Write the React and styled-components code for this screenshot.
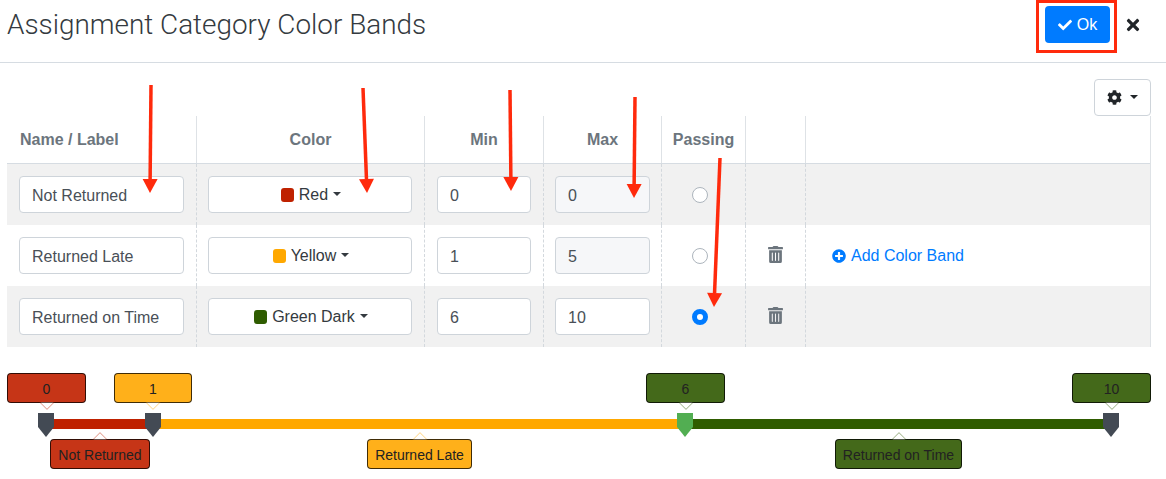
import React from 'react';
import styled, { createGlobalStyle } from 'styled-components';
import { FaCheck, FaTimes, FaCog, FaTrashAlt, FaPlusCircle } from 'react-icons/fa';

const GlobalStyle = createGlobalStyle`
  html, body { margin: 0; padding: 0; background: #fff; }
  body {
    font-family: "Liberation Sans", Arial, sans-serif;
    font-size: 16px;
    color: #343a40;
    overflow: hidden;
  }
  * { box-sizing: border-box; }
`;

const COLUMNS = '190px 228px 119px 118px 84px 60px 1fr';

const Page = styled.div`
  position: relative;
  width: 1166px;
  height: 479px;
  overflow: hidden;
`;

const Header = styled.header`
  display: flex;
  align-items: center;
  justify-content: space-between;
  height: 63px;
  padding: 0 24px 13px 7px;
  border-bottom: 1px solid #d6dce2;
`;

const Title = styled.h1`
  margin: 0;
  font-family: Roboto, "Liberation Sans", sans-serif;
  font-size: 27.9px;
  font-weight: 300;
  color: #343a40;
`;

const HeaderActions = styled.div`
  display: flex;
  align-items: center;
  gap: 14px;
`;

const OkButton = styled.button`
  display: flex;
  align-items: center;
  justify-content: center;
  gap: 5px;
  width: 65px;
  height: 37px;
  border: 0;
  border-radius: 4px;
  background: #007bff;
  color: #fff;
  font: inherit;
  font-size: 16px;
`;

const CloseButton = styled.button`
  display: flex;
  padding: 0;
  border: 0;
  background: none;
  color: #212529;
  font-size: 18px;
`;

const Toolbar = styled.div`
  display: flex;
  justify-content: flex-end;
  padding: 16px 15px 0 0;
`;

const GearButton = styled.button`
  display: flex;
  align-items: center;
  justify-content: center;
  gap: 8px;
  width: 57px;
  height: 37px;
  border: 1px solid #ced4da;
  border-radius: 4px;
  background: #fff;
  color: #212529;
  font-size: 15px;
`;

const Caret = styled.span`
  display: inline-block;
  width: 0;
  height: 0;
  margin-top: -2px;
  border-top: 4px solid currentColor;
  border-left: 4px solid transparent;
  border-right: 4px solid transparent;
`;

const Table = styled.div`
  margin: 0 15px 0 7px;
  border-right: 1px solid #dee2e6;
`;

const HeadRow = styled.div`
  display: grid;
  grid-template-columns: ${COLUMNS};
  height: 48px;
  border-bottom: 1px solid #d6dce2;
`;

const HeadCell = styled.div`
  display: flex;
  align-items: center;
  justify-content: ${p => (p.$left ? 'flex-start' : 'center')};
  padding-left: ${p => (p.$left ? '13px' : '0')};
  border-right: ${p => (p.$last ? '0' : '1px solid #dee2e6')};
  color: #6c757d;
  font-size: 16px;
  font-weight: 700;
`;

const Row = styled.div`
  display: grid;
  grid-template-columns: ${COLUMNS};
  height: 61px;
  background: ${p => (p.$shaded ? '#f1f1f1' : '#fff')};
`;

const Cell = styled.div`
  display: flex;
  align-items: center;
  padding: 0 ${p => p.$pr ?? 12}px 0 ${p => p.$pl ?? 12}px;
  border-right: ${p => (p.$last ? '0' : '1px dashed #d3d8dd')};
`;

const CenterCell = styled(Cell)`
  justify-content: center;
  padding: 0 ${p => p.$pr ?? 0}px 0 0;
`;

const TextInput = styled.div`
  display: flex;
  align-items: center;
  width: 100%;
  height: 37px;
  padding: 2px 12px 0;
  border: 1px solid #ced4da;
  border-radius: 4px;
  background: ${p => (p.$readOnly ? '#f6f7f9' : '#fff')};
  color: #495057;
  font-size: 16px;
`;

const ColorButton = styled.div`
  display: flex;
  align-items: center;
  justify-content: center;
  gap: 5px;
  width: 100%;
  height: 37px;
  padding-left: 2px;
  border: 1px solid #ced4da;
  border-radius: 4px;
  background: #fff;
  color: #343a40;
  font-size: 16px;
`;

const Swatch = styled.span`
  width: 13px;
  height: 14px;
  border-radius: 3px;
  background: ${p => p.$color};
`;

const Radio = styled.span`
  width: 16px;
  height: 16px;
  border-radius: 50%;
  background: #fff;
  border: ${p => (p.$checked ? '5px solid #007bff' : '1px solid #adb5bd')};
`;

const TrashIcon = styled(FaTrashAlt)`
  color: #6c757d;
  font-size: 17px;
  margin-top: -3px;
`;

const AddLink = styled.a`
  display: flex;
  align-items: center;
  gap: 5px;
  margin-left: 14px;
  color: #007bff;
  font-size: 16px;
`;

const Slider = styled.div`
  position: relative;
  height: 116px;
  margin-top: 16px;
`;

const Track = styled.div`
  position: absolute;
  top: 56px;
  left: ${p => p.$from}px;
  width: ${p => p.$to - p.$from}px;
  height: 10px;
  background: ${p => p.$color};
`;

const Handle = styled.svg`
  position: absolute;
  top: 50px;
  left: ${p => p.$x - 8}px;
  width: 16px;
  height: 24px;
  fill: ${p => (p.$active ? '#52ae52' : '#434a54')};
`;

const Flag = styled.div`
  position: absolute;
  top: ${p => (p.$below ? '76px' : '10px')};
  left: ${p => p.$x}px;
  display: flex;
  align-items: center;
  justify-content: center;
  width: ${p => p.$w}px;
  height: 30px;
  border: 1px solid rgba(0, 0, 0, 0.75);
  border-radius: 4px;
  background: ${p => p.$color};
  color: #222;
  font-size: 14px;
  padding-top: 1px;

  &::after {
    content: '';
    position: absolute;
    left: 50%;
    width: 9px;
    height: 9px;
    background: #fff;
    border: 1.5px solid ${p => p.$color};
    opacity: 0.5;
    clip-path: polygon(100% 0, 100% 100%, 0 100%);
    ${p => (p.$below
      ? 'top: -6px; transform: translateX(-50%) rotate(-135deg);'
      : 'bottom: -6px; transform: translateX(-50%) rotate(45deg);')}
  }
`;

const RedBox = styled.div`
  position: absolute;
  left: 1036px;
  top: 0;
  width: 81px;
  height: 53px;
  border: 3px solid #ff2a0c;
`;

const Arrows = styled.svg`
  position: absolute;
  left: 0;
  top: 0;
  width: 1166px;
  height: 479px;
  pointer-events: none;
`;

const bands = [
  { name: 'Not Returned', color: 'Red', hex: '#bf2100', min: '0', max: '0' },
  { name: 'Returned Late', color: 'Yellow', hex: '#ffa800', min: '1', max: '5', removable: true, add: true },
  { name: 'Returned on Time', color: 'Green Dark', hex: '#2f5c00', min: '6', max: '10', removable: true, passing: true },
];

const tracks = [
  { from: 50, to: 150, color: '#bf2100' },
  { from: 150, to: 685, color: '#ffa800' },
  { from: 685, to: 1111, color: '#2f5c00' },
];

const handles = [{ x: 46 }, { x: 153 }, { x: 685, active: true }, { x: 1111 }];

const topFlags = [
  { x: 7, w: 79, color: '#c63517', label: '0' },
  { x: 114, w: 78, color: '#ffb01a', label: '1' },
  { x: 646, w: 79, color: '#44691a', label: '6' },
  { x: 1072, w: 79, color: '#44691a', label: '10' },
];

const bottomFlags = [
  { x: 50, w: 100, color: '#c63517', label: 'Not Returned' },
  { x: 367, w: 105, color: '#ffb01a', label: 'Returned Late' },
  { x: 835, w: 127, color: '#44691a', label: 'Returned on Time' },
];

// x1,y1 = tail, x2,y2 = tip
const arrows = [
  [151, 85, 150, 193],
  [363, 88, 367, 193],
  [510, 90, 511, 191],
  [635, 97, 634, 198],
  [720, 158, 714, 307],
];

function Arrow({ line }) {
  const [x1, y1, x2, y2] = line;
  const len = Math.hypot(x2 - x1, y2 - y1);
  const ux = (x2 - x1) / len;
  const uy = (y2 - y1) / len;
  const bx = x2 - ux * 14;
  const by = y2 - uy * 14;
  const head = `${x2},${y2} ${bx - uy * 7.5},${by + ux * 7.5} ${bx + uy * 7.5},${by - ux * 7.5}`;
  return (
    <g>
      <line x1={x1} y1={y1} x2={bx} y2={by} stroke="#ff2a0c" strokeWidth="3.5" />
      <polygon points={head} fill="#ff2a0c" />
    </g>
  );
}

export default function App() {
  return (
    <Page>
      <GlobalStyle />
      <Header>
        <Title>Assignment Category Color Bands</Title>
        <HeaderActions>
          <OkButton><FaCheck size={14} /> Ok</OkButton>
          <CloseButton><FaTimes /></CloseButton>
        </HeaderActions>
      </Header>
      <Toolbar>
        <GearButton><FaCog /><Caret /></GearButton>
      </Toolbar>
      <Table>
        <HeadRow>
          <HeadCell $left>Name / Label</HeadCell>
          <HeadCell>Color</HeadCell>
          <HeadCell>Min</HeadCell>
          <HeadCell>Max</HeadCell>
          <HeadCell>Passing</HeadCell>
          <HeadCell />
          <HeadCell $last />
        </HeadRow>
        {bands.map((band, i) => (
          <Row key={band.name} $shaded={i % 2 === 0}>
            <Cell><TextInput>{band.name}</TextInput></Cell>
            <Cell $pl={11}>
              <ColorButton>
                <Swatch $color={band.hex} />
                {band.color}
                <Caret />
              </ColorButton>
            </Cell>
            <Cell><TextInput>{band.min}</TextInput></Cell>
            <Cell $pl={11} $pr={11}><TextInput $readOnly={band.max !== '10'}>{band.max}</TextInput></Cell>
            <CenterCell $pr={7}><Radio $checked={band.passing} /></CenterCell>
            <CenterCell>{band.removable && <TrashIcon />}</CenterCell>
            <Cell $last>
              {band.add && <AddLink><FaPlusCircle size={14} /> Add Color Band</AddLink>}
            </Cell>
          </Row>
        ))}
      </Table>
      <Slider>
        {tracks.map(t => <Track key={t.from} $from={t.from} $to={t.to} $color={t.color} />)}
        {handles.map(h => (
          <Handle key={h.x} $x={h.x} $active={h.active} viewBox="0 0 16 24">
            <polygon points="0,0 16,0 16,14 8,24 0,14" />
          </Handle>
        ))}
        {topFlags.map(f => <Flag key={f.x} $x={f.x} $w={f.w} $color={f.color}>{f.label}</Flag>)}
        {bottomFlags.map(f => <Flag key={f.x} $below $x={f.x} $w={f.w} $color={f.color}>{f.label}</Flag>)}
      </Slider>
      <RedBox />
      <Arrows viewBox="0 0 1166 479">
        {arrows.map(a => <Arrow key={a[0]} line={a} />)}
      </Arrows>
    </Page>
  );
}
